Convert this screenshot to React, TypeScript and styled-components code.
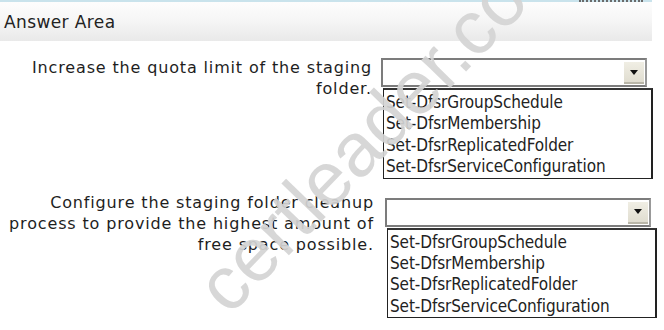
import React from "react";
import styled, { createGlobalStyle } from "styled-components";

const Global = createGlobalStyle`
  html, body { margin: 0; padding: 0; background: #ffffff; }
  body { width: 664px; height: 330px; overflow: hidden; }
`;

const Page = styled.div`
  position: relative;
  width: 664px;
  height: 330px;
  overflow: hidden;
  background: #fff;
  display: flex;
  flex-direction: column;
`;

const TopStrip = styled.div`
  height: 2px;
  width: 652px;
  background: #c9e3ec;
  display: flex;
  justify-content: flex-end;
`;

const Dots = styled.div`
  width: 64px;
  margin-right: 9px;
  border-top: 2px dotted #6a6a6a;
`;

const Header = styled.div`
  width: 652px;
  height: 39px;
  box-sizing: border-box;
  padding-left: 4px;
  display: flex;
  align-items: center;
  background: linear-gradient(#fdfdfd, #f6f6f6 45%, #e9e9e9);
  font-family: "DejaVu Sans", Verdana, sans-serif;
  font-size: 17px;
  letter-spacing: 0.4px;
  color: #222;
`;

const Body = styled.div`
  display: flex;
  flex-direction: column;
  padding-top: 16px;
`;

const Row = styled.div<{ $gap: number }>`
  display: grid;
  grid-template-columns: 375px 1fr;
  margin-bottom: ${(p) => p.$gap}px;
`;

const Label = styled.div<{ $pad: number }>`
  text-align: right;
  padding-right: ${(p) => p.$pad}px;
  font-family: "DejaVu Sans", Verdana, sans-serif;
  font-size: 16px;
  letter-spacing: 0.85px;
  line-height: 21px;
  color: #1e1e1e;
  white-space: nowrap;
`;

const Control = styled.div<{ $shift: number; $top: number }>`
  display: flex;
  flex-direction: column;
  padding-left: ${(p) => p.$shift}px;
  padding-top: ${(p) => p.$top}px;
`;

const SelectBox = styled.div`
  width: 266px;
  height: 29px;
  box-sizing: border-box;
  border: 2px solid #7c7c7c;
  border-right-color: #999;
  background: #fff;
  display: flex;
  justify-content: flex-end;
  align-items: stretch;
  padding: 2px 1px 1px 0;
`;

const DropButton = styled.div`
  width: 20px;
  background: linear-gradient(#f0eee4, #e0ddd0);
  border-bottom: 2px solid #b9b6a8;
  display: flex;
  align-items: center;
  justify-content: center;
`;

const Triangle = styled.div`
  width: 0;
  height: 0;
  border-left: 4px solid transparent;
  border-right: 4px solid transparent;
  border-top: 5px solid #111;
`;

const List = styled.div`
  margin-top: 1px;
  margin-left: 2px;
  width: 270px;
  box-sizing: border-box;
  border: 1px solid #222;
  border-top: 2px solid #333;
  border-right-width: 2px;
  padding: 2px 0 0 2px;
  display: flex;
  flex-direction: column;
`;

const Item = styled.div`
  font-family: "DejaVu Sans Condensed", "DejaVu Sans", sans-serif;
  font-size: 17px;
  line-height: 21.4px;
  color: #222;
  letter-spacing: -0.1px;
  white-space: nowrap;
`;

const Watermark = styled.div`
  position: absolute;
  left: 238px;
  top: 249px;
  font-family: "Liberation Sans", Arial, sans-serif;
  font-size: 76px;
  line-height: 1;
  color: rgba(212, 212, 212, 0.92);
  transform: rotate(-46deg);
  transform-origin: 0 100%;
  white-space: nowrap;
  pointer-events: none;
`;

const options = [
  "Set-DfsrGroupSchedule",
  "Set-DfsrMembership",
  "Set-DfsrReplicatedFolder",
  "Set-DfsrServiceConfiguration",
];

function Dropdown() {
  return (
    <>
      <SelectBox>
        <DropButton>
          <Triangle />
        </DropButton>
      </SelectBox>
      <List>
        {options.map((o) => (
          <Item key={o}>{o}</Item>
        ))}
      </List>
    </>
  );
}

export default function App() {
  return (
    <Page>
      <Global />
      <TopStrip>
        <Dots />
      </TopStrip>
      <Header>Answer Area</Header>
      <Body>
        <Row $gap={13}>
          <Label $pad={3}>
            Increase the quota limit of the staging
            <br />
            folder.
          </Label>
          <Control $shift={6} $top={1}>
            <Dropdown />
          </Control>
        </Row>
        <Row $gap={0}>
          <Label $pad={1}>
            Configure the staging folder cleanup
            <br />
            process to provide the highest amount of
            <br />
            free space possible.
          </Label>
          <Control $shift={10} $top={6}>
            <Dropdown />
          </Control>
        </Row>
      </Body>
      <Watermark>certleader.com</Watermark>
    </Page>
  );
}
